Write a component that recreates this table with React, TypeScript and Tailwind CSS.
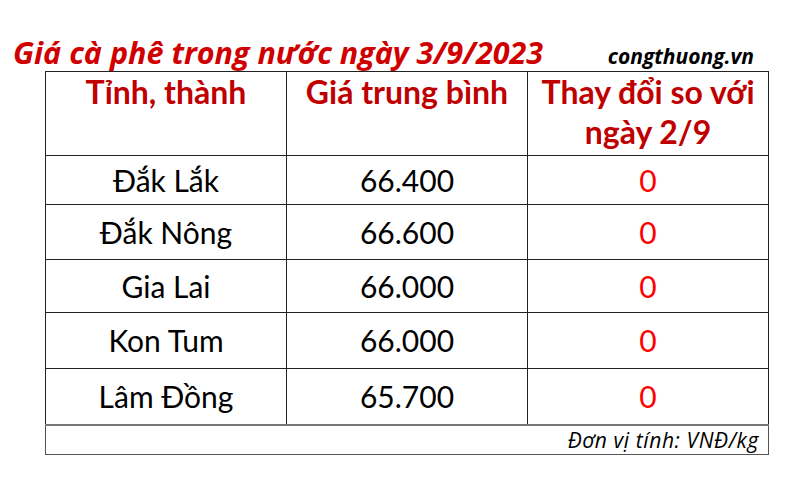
const rows = [
  { name: "Đắk Lắk", price: "66.400", change: "0", h: "h-[49px]" },
  { name: "Đắk Nông", price: "66.600", change: "0", h: "h-[55px]" },
  { name: "Gia Lai", price: "66.000", change: "0", h: "h-[53px]" },
  { name: "Kon Tum", price: "66.000", change: "0", h: "h-[56px]" },
  { name: "Lâm Đồng", price: "65.700", change: "0", h: "h-[56px]" },
];

const cell = "border border-[#222] text-center align-middle p-0";

export default function App() {
  return (
    <div className="w-[800px] h-[487px] bg-white overflow-hidden">
      <div className="flex items-baseline h-[71px] pt-[35px] font-['Open_Sans',sans-serif] italic font-bold">
        <h1 className="ml-[13px] text-[30.5px] leading-[34px] text-[#d00000]">
          Giá cà phê trong nước ngày 3/9/2023
        </h1>
        <span className="ml-auto mr-[46px] text-[21px] leading-[34px] text-black">
          congthuong.vn
        </span>
      </div>

      <table className="ml-[45px] w-[724px] table-fixed border-collapse font-['Lato',sans-serif] text-[30px]">
        <thead>
          <tr className="h-[84px]">
            {["Tỉnh, thành", "Giá trung bình", "Thay đổi so với ngày 2/9"].map((t) => (
              <th
                key={t}
                className="border border-[#222] align-top pt-0 px-1 font-bold text-[32px] text-[#c00000] leading-[40px]"
              >
                {t}
              </th>
            ))}
          </tr>
        </thead>
        <tbody>
          {rows.map((r) => (
            <tr key={r.name} className={r.h}>
              <td className={`${cell} text-black`}>{r.name}</td>
              <td className={`${cell} text-black`}>{r.price}</td>
              <td className={`${cell} text-[#ff0000]`}>{r.change}</td>
            </tr>
          ))}
          <tr className="h-[30px]">
            <td
              colSpan={3}
              className="border border-[#555] border-t-2 border-t-[#777] text-right pr-[9px] font-['Open_Sans',sans-serif] italic text-[21px] tracking-[0.6px] leading-[26px] text-black"
            >
              Đơn vị tính: VNĐ/kg
            </td>
          </tr>
        </tbody>
      </table>
    </div>
  );
}
